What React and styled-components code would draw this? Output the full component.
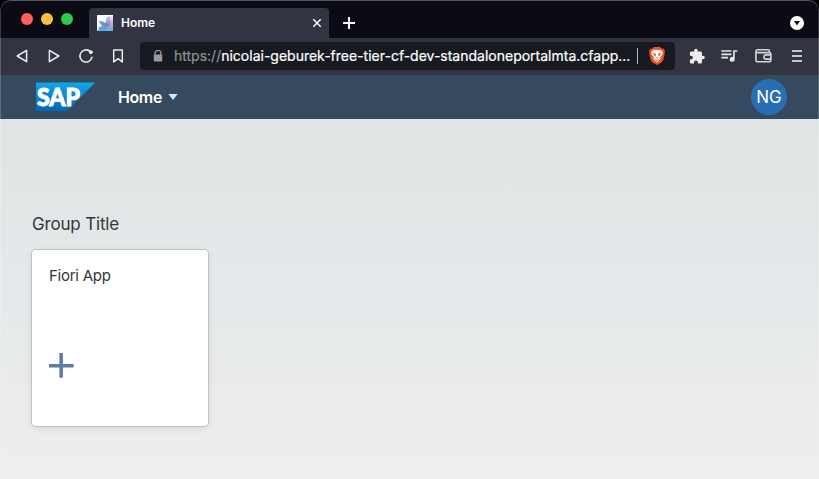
import React from "react";
import styled, { createGlobalStyle } from "styled-components";

const GlobalStyle = createGlobalStyle`
  *, *::before, *::after { box-sizing: border-box; }
  html { background: #000; }
  body { margin: 0; overflow: hidden; }
`;

const Window = styled.div`
  position: relative;
  width: 819px;
  height: 479px;
  display: flex;
  flex-direction: column;
  overflow: hidden;
  border-radius: 10px 10px 0 0;
  background: #0b0b15;
  font-family: Inter, "Liberation Sans", sans-serif;

  &::after {
    content: "";
    position: absolute;
    inset: 0;
    pointer-events: none;
    border-radius: inherit;
    border-top: 1px solid #55565b;
    border-left: 1px solid rgba(255, 255, 255, 0.2);
    border-right: 1px solid rgba(255, 255, 255, 0.2);
  }
`;

const TabStrip = styled.header`
  display: flex;
  align-items: flex-end;
  height: 38px;
  flex: none;
  padding: 0 15px 0 21px;
`;

const TrafficLights = styled.div`
  display: flex;
  gap: 8px;
  align-self: center;
  width: 68px;
`;

const Light = styled.span`
  width: 12px;
  height: 12px;
  border-radius: 50%;
  background: ${(p) => p.$color};
`;

const Tab = styled.div`
  display: flex;
  align-items: center;
  width: 240px;
  height: 30px;
  padding: 0 7px 0 8px;
  border-radius: 4px 4px 0 0;
  background: #323442;
  color: #fff;
`;

const TabTitle = styled.span`
  flex: 1;
  margin-left: 8px;
  font-size: 12px;
  font-weight: 600;
  line-height: 16px;
`;

const NewTab = styled.button`
  display: flex;
  margin: 0 0 8px 13px;
  padding: 0;
  border: 0;
  background: none;
`;

const TabSearch = styled.button`
  display: flex;
  margin: 0 0 8px auto;
  padding: 0;
  border: 0;
  background: none;
`;

const Toolbar = styled.nav`
  display: flex;
  align-items: center;
  flex: none;
  height: 37px;
  padding: 0 12px 1px;
  background: #323442;
`;

const NavButtons = styled.div`
  display: flex;
  gap: 12px;
  width: 128px;
`;

const AddressBar = styled.div`
  display: flex;
  align-items: center;
  width: 535px;
  height: 28px;
  padding: 0 10px 0 12px;
  border-radius: 4px;
  background: #181a21;
`;

const Url = styled.span`
  width: 463px;
  margin-left: 10px;
  font-size: 14px;
  line-height: 20px;
  -webkit-text-stroke: 0.2px;
  white-space: nowrap;
  color: #fff;
`;

const Scheme = styled.span`
  color: #8f9095;
`;

const Divider = styled.span`
  width: 1px;
  height: 16px;
  margin-right: 11px;
  background: #b5b6b9;
`;

const Actions = styled.div`
  display: flex;
  align-items: center;
  flex: 1;
  justify-content: space-between;
  padding: 0 0 0 13px;
`;

const Shell = styled.header`
  display: flex;
  align-items: center;
  flex: none;
  height: 44px;
  padding: 0 32px 0 36px;
  background: #354a5f;
  color: #fff;
`;

const HomeMenu = styled.button`
  display: flex;
  align-items: center;
  gap: 6px;
  margin-left: 22px;
  padding: 0;
  border: 0;
  background: none;
  color: #fff;
  font: 600 16px/20px Inter, sans-serif;
  letter-spacing: -0.4px;
`;

const Avatar = styled.div`
  width: 36px;
  height: 36px;
  margin-left: auto;
  border-radius: 50%;
  background: #286eb4;
  font-size: 17px;
  line-height: 37px;
  text-align: center;
`;

const Page = styled.main`
  flex: 1;
  padding: 93px 32px 0;
  background: linear-gradient(#dfe4e5, #edeef0);
  color: #32363a;
  font-family: Inter, "Liberation Sans", sans-serif;
`;

const GroupTitle = styled.h1`
  margin: 0;
  font-size: 17px;
  font-weight: 400;
  line-height: 24px;
  letter-spacing: -0.18px;
`;

const Tile = styled.article`
  display: flex;
  flex-direction: column;
  justify-content: space-between;
  width: 176px;
  height: 176px;
  margin-top: 14px;
  padding: 15px 17px 48px;
  border-radius: 4px;
  background: #fff;
  box-shadow: 0 0 0 1px rgba(0, 0, 0, 0.13), 0 2px 8px rgba(0, 0, 0, 0.1);
`;

const TileTitle = styled.h2`
  margin: 0;
  font-size: 15px;
  font-weight: 400;
  line-height: 22px;
  letter-spacing: -0.25px;
`;

const Icon = styled.svg`
  display: block;
  flex: none;
`;

const LogoIcon = styled(Icon)`
  overflow: visible;
`;

const LogoText = styled.text`
  font: 900 24px Lato, sans-serif;
  fill: #fff;
  stroke: #fff;
  stroke-width: 1px;
`;

function Favicon() {
  return (
    <Icon width="16" height="16" viewBox="0 0 16 16">
      <defs>
        <linearGradient id="petal" x1="0" x2="1" y1="0" y2="0">
          <stop offset="0" stopColor="#6fa8e0" />
          <stop offset="1" stopColor="#7b6fb4" />
        </linearGradient>
        <linearGradient id="upright" x1="0" x2="0" y1="0" y2="1">
          <stop offset="0" stopColor="#b9d3ee" />
          <stop offset="1" stopColor="#8378ba" />
        </linearGradient>
        <linearGradient id="rose" x1="0" x2="0" y1="0" y2="1">
          <stop offset="0" stopColor="#f6e3f1" />
          <stop offset=".5" stopColor="#d0a3d2" />
          <stop offset="1" stopColor="#74a9de" />
        </linearGradient>
      </defs>
      <path d="M0 0h16v16H0z" fill="#fff" />
      <path d="M12 1c2 0 3 0 4 1v14H5c4-2 6-6 7-15z" fill="url(#rose)" />
      <path d="M0 16c1-2 3-3 6-3s7 0 10-1v4z" fill="#62b6de" />
      <path d="M9 9C8 5 9 2 12 1c2 3 2 8 0 10z" fill="url(#upright)" />
      <path d="M2 6c4 0 8 2 10 5-4 2-9 0-10-5z" fill="url(#petal)" />
      <path d="M1 13c3-2 7-3 11-2-2 4-7 5-11 2z" fill="#659be0" />
    </Icon>
  );
}

function NavIcon({ children }) {
  return (
    <Icon width="20" height="20" viewBox="0 0 20 20" fill="none" stroke="#ececed" strokeWidth="1.5" strokeLinejoin="round" strokeLinecap="round">
      {children}
    </Icon>
  );
}

function BraveIcon() {
  return (
    <Icon width="16" height="18" viewBox="0 0 16 18">
      <path d="M5 0h6l1.7 1.8 1.6-.2L16 4l-.6 2 .3 1-1.6 6.3c-.4 1-1.2 1.8-2.2 2.5L8 18l-3.9-2.2c-1-.7-1.8-1.5-2.2-2.5L.3 7l.3-1L0 4l1.7-2.4 1.6.2z" fill="#f4511e" />
      <path d="M4.3 2.8 6.5 3 8 2.7 9.5 3l2.2-.2 2.1 2.8-.5 1.8-2.1 2.8.4 1.5-3.6 3.7-3.6-3.7.4-1.5-2.1-2.8-.5-1.8z" fill="#fff" />
      <path d="m4 6.1 2.7.5.2 1.2-.5 1.7L4.8 8zm8 0-2.7.5-.2 1.2.5 1.7L11.2 8zM8 10l1 1-1 .6-1-.6zM5.7 11.8 8 13l2.3-1.2L8 14.4z" fill="#f4511e" />
    </Icon>
  );
}

function SapLogo() {
  return (
    <LogoIcon width="60" height="30" viewBox="0 0 60 30" role="img" aria-label="SAP">
      <defs>
        <linearGradient id="sap" x1="0" x2="0" y1="0" y2="1">
          <stop offset="0" stopColor="#0fa7ea" />
          <stop offset="1" stopColor="#0565b4" />
        </linearGradient>
      </defs>
      <path d="M0 .6h59.3L31 29H0z" fill="url(#sap)" />
      <LogoText x="1" y="23.7" textLength="43" lengthAdjust="spacingAndGlyphs">SAP</LogoText>
    </LogoIcon>
  );
}

export default function App() {
  return (
    <>
      <GlobalStyle />
      <Window>
        <TabStrip>
          <TrafficLights>
            <Light $color="#ff6159" />
            <Light $color="#ffbf43" />
            <Light $color="#31c94b" />
          </TrafficLights>
          <Tab>
            <Favicon />
            <TabTitle>Home</TabTitle>
            <Icon width="10" height="10" viewBox="0 0 10 10" stroke="#f4f4f5" strokeWidth="1.6">
              <path d="m1.3 1.3 7.4 7.4m0-7.4L1.3 8.7" />
            </Icon>
          </Tab>
          <NewTab aria-label="New tab">
            <Icon width="14" height="14" viewBox="0 0 14 14" stroke="#fff" strokeWidth="2">
              <path d="M7 1v12M1 7h12" />
            </Icon>
          </NewTab>
          <TabSearch aria-label="Search tabs">
            <Icon width="14" height="14" viewBox="0 0 14 14">
              <circle cx="7" cy="7" r="7" fill="#fff" />
              <path d="M4 5h6L7 9.4z" fill="#0b0b15" />
            </Icon>
          </TabSearch>
        </TabStrip>
        <Toolbar>
          <NavButtons>
            <NavIcon><path d="M14.6 4.3v11.4L5.2 10z" /></NavIcon>
            <NavIcon><path d="M5.4 4.3v11.4l9.4-5.7z" /></NavIcon>
            <NavIcon>
              <path d="M13.8 5.2A6.1 6.1 0 1 0 16 11.2" />
              <circle cx="14.8" cy="6.2" r="1.5" fill="#ececed" strokeWidth="1" />
            </NavIcon>
            <NavIcon><path d="M5.7 4h8.6v12L10 12.7 5.7 16z" /></NavIcon>
          </NavButtons>
          <AddressBar>
            <Icon width="12" height="12" viewBox="0 0 12 12">
              <path d="M3 5V3.4a3 3 0 0 1 6 0V5" fill="none" stroke="#9a9ca3" strokeWidth="1.3" />
              <rect x="1.8" y="4.5" width="8.4" height="7" rx=".8" fill="#9a9ca3" />
            </Icon>
            <Url>
              <Scheme>https://</Scheme>nicolai-geburek-free-tier-cf-dev-standaloneportalmta.cfapp...
            </Url>
            <Divider />
            <BraveIcon />
          </AddressBar>
          <Actions>
            <Icon width="18" height="17" viewBox="0 0 24 24" fill="#ededee">
              <path d="M20.5 11H19V7c0-1.1-.9-2-2-2h-4V3.5a2.5 2.5 0 0 0-5 0V5H4c-1.1 0-2 .9-2 2v3.8h1.5a2.7 2.7 0 0 1 0 5.4H2V20c0 1.1.9 2 2 2h3.8v-1.5a2.7 2.7 0 0 1 5.4 0V22H17c1.1 0 2-.9 2-2v-4h1.5a2.5 2.5 0 0 0 0-5z" />
            </Icon>
            <Icon width="20" height="20" viewBox="1.3 0 24 24" fill="#e6e6e8">
              <path d="M15 5H3v2h12V5zm0 4H3v2h12V9zM3 15h8v-2H3v2zM17 5v8.2a3 3 0 1 0 2 2.8V7h3V5h-5z" />
            </Icon>
            <Icon width="18" height="16" viewBox="0.6 0 18 16" fill="none" stroke="#d6d6d8" strokeWidth="1.6" strokeLinejoin="round">
              <path d="M15 4.6V3.3c0-.9-.6-1.5-1.5-1.5h-10c-1.2 0-2 .7-2 1.7v8.2c0 1.2.8 2 2 2h11c1.2 0 2-.8 2-2V6.1c0-.9-.7-1.5-1.6-1.5H2" />
              <path d="M16.3 6.9h-4.6a2.1 2.1 0 0 0 0 4.2h4.6" />
            </Icon>
            <Icon width="20" height="14" viewBox="0 0 20 14" stroke="#c3c4c8" strokeWidth="2">
              <path d="M5 2h10M5 7h10M5 12h10" />
            </Icon>
          </Actions>
        </Toolbar>
        <Shell>
          <SapLogo />
          <HomeMenu>
            Home
            <Icon width="10" height="6" viewBox="0 0 10 6"><path d="M.4 0h9.2L5 6z" fill="#d1e8ff" /></Icon>
          </HomeMenu>
          <Avatar>NG</Avatar>
        </Shell>
        <Page>
          <GroupTitle>Group Title</GroupTitle>
          <Tile>
            <TileTitle>Fiori App</TileTitle>
            <Icon width="25" height="25" viewBox="0 0 25 25" fill="#5a7da6">
              <rect x="10.4" y="0" width="3.5" height="24.8" rx=".6" />
              <rect x="0" y="11" width="24.7" height="3.5" rx=".6" />
            </Icon>
          </Tile>
        </Page>
      </Window>
    </>
  );
}
